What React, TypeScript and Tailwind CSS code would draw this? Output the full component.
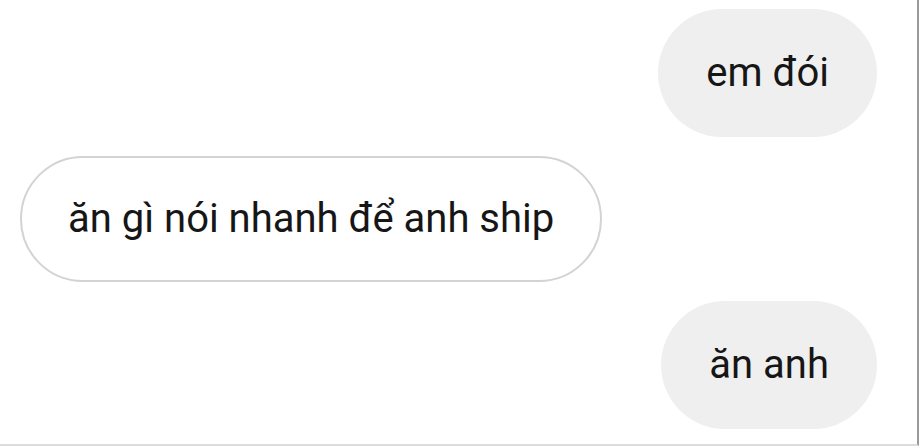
import React from 'react';

type Msg = { id: number; text: string; mine: boolean };

const MESSAGES: Msg[] = [
  { id: 1, text: 'em đói', mine: true },
  { id: 2, text: 'ăn gì nói nhanh để anh ship', mine: false },
  { id: 3, text: 'ăn anh', mine: true },
];

export default function App() {
  return (
    <div
      className="w-[919px] h-[446px] bg-white border-r-2 border-r-[#9a9a9a] border-b-2 border-b-[#dcdcdc] overflow-hidden"
      style={{ fontFamily: 'Roboto, "Noto Sans", sans-serif' }}
    >
      <div className="flex flex-col gap-[19px] pt-[9px] pl-[20px] pr-[40px]">
        {MESSAGES.map((m) =>
          m.mine ? (
            <div key={m.id} className="flex justify-end">
              <div className="h-[128px] px-[48px] rounded-full bg-[#efefef] flex items-center text-[40px] leading-none text-[#161616]">
                {m.text}
              </div>
            </div>
          ) : (
            <div key={m.id} className="flex justify-start">
              <div className="h-[126px] px-[46px] rounded-full bg-white border-2 border-[#d3d3d3] flex items-center text-[40px] leading-none text-[#161616]">
                {m.text}
              </div>
            </div>
          )
        )}
      </div>
    </div>
  );
}
